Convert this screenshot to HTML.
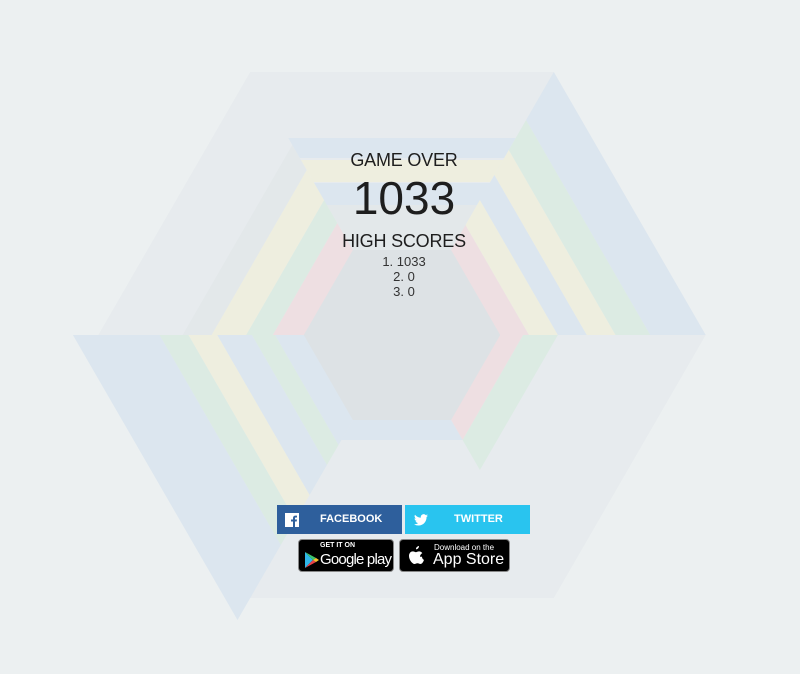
<!DOCTYPE html>
<html><head><meta charset="utf-8"><style>
html,body{margin:0;padding:0;background:#ecf0f1;width:800px;height:674px;overflow:hidden;font-family:"Liberation Sans",sans-serif}
svg{position:absolute;left:0;top:0}
.t{position:absolute;left:0;width:808px;text-align:center;color:#1e1e1e;white-space:nowrap}
.btn{position:absolute;height:29px;color:#fff;font-weight:bold;font-size:11px;line-height:29px;box-sizing:border-box}
.badge{position:absolute;top:539px;height:33px;background:#000;border:1px solid #888;border-radius:4px;box-sizing:border-box;color:#fff;white-space:nowrap;overflow:hidden}
</style></head><body>
<svg id="s" width="800" height="674" viewBox="0 0 800 674"></svg>
<div class="t" style="top:150px;font-size:18px;letter-spacing:-0.2px;">GAME OVER</div>
<div class="t" style="top:171px;font-size:46px;">1033</div>
<div class="t" style="top:231px;font-size:18px;letter-spacing:-0.2px;">HIGH SCORES</div>
<div class="t" style="top:254px;font-size:13px;line-height:15px;color:#333">1. 1033<br>2. 0<br>3. 0</div>

<div class="btn" style="left:277px;top:505px;width:125px;background:#2e5f9c;">
 <svg width="14" height="14" style="left:8px;top:8px" viewBox="0 0 14 14"><rect width="14" height="14" fill="#fff"/><path d="M8 14V8.5H6V6.5H8V5C8 3.4 9 2.6 10.4 2.6H12V4.5H10.8C10.2 4.5 10 4.8 10 5.3V6.5H12L11.7 8.5H10V14Z" fill="#2e5f9c"/></svg>
 <span style="position:absolute;left:43px">FACEBOOK</span></div>
<div class="btn" style="left:405px;top:505px;width:125px;background:#29c4ef;">
 <svg width="14" height="12" style="left:9px;top:9px" viewBox="0 0 24 20"><path d="M24 2.4a9.8 9.8 0 0 1-2.8.8A4.9 4.9 0 0 0 23.3.4a9.9 9.9 0 0 1-3.1 1.2A4.9 4.9 0 0 0 11.8 6 14 14 0 0 1 1.7.9a4.9 4.9 0 0 0 1.5 6.6A4.9 4.9 0 0 1 1 6.9a4.9 4.9 0 0 0 3.9 4.8 4.9 4.9 0 0 1-2.2.1 4.9 4.9 0 0 0 4.6 3.4A9.9 9.9 0 0 1 0 17.3 14 14 0 0 0 7.5 19.5c9.1 0 14-7.5 14-14v-.6A10 10 0 0 0 24 2.4z" fill="#fff"/></svg>
 <span style="position:absolute;left:49px">TWITTER</span></div>

<div class="badge" style="left:298px;width:96px;">
 <svg width="16" height="18" style="left:5px;top:11px" viewBox="0 0 16 18"><path d="M1 1L9 9L1 17Z" fill="#2fb6e8"/><path d="M1 1L12 7L9 9Z" fill="#3ec66b"/><path d="M1 17L12 11L9 9Z" fill="#e8434a"/><path d="M12 7L15 9L12 11L9 9Z" fill="#f8c22d"/></svg>
 <span style="position:absolute;left:21px;top:2px;font-size:7px;font-weight:bold">GET IT ON</span>
 <span style="position:absolute;left:21px;top:11px;font-size:15px;letter-spacing:-0.8px">Google play</span></div>
<div class="badge" style="left:399px;width:111px;">
 <svg width="18" height="20" style="left:7px;top:6px" viewBox="0 0 18 20"><path d="M12 0c.2 1.5-1.3 3.4-3 3.3-.2-1.5 1.3-3.2 3-3.3zM15 10.7c0 2.3 2 3.2 2 3.2s-1.2 4.1-3.5 4.1c-1.2 0-1.6-.7-3-.7s-1.9.7-3 .7C5.4 18 2 13.9 2 10c0-3 2-4.6 3.8-4.6 1.3 0 2.1.8 3.1.8s1.7-.8 3.2-.8c1.2 0 2.5.6 3.2 1.7-.2.1-2.3 1.3-2.3 3.6z" fill="#fff"/></svg>
 <span style="position:absolute;left:34px;top:3px;font-size:8px">Download on the</span>
 <span style="position:absolute;left:33px;top:11px;font-size:16px">App Store</span></div>

<script>
var C=[402,335],S=document.getElementById('s'),ns='http://www.w3.org/2000/svg';
function pt(k,a){var r=a/0.866,t=k*Math.PI/3;return [C[0]+r*Math.cos(t),C[1]+r*Math.sin(t)];}
function poly(p,f){var e=document.createElementNS(ns,'polygon');e.setAttribute('points',p.map(function(q){return q[0].toFixed(1)+','+q[1].toFixed(1)}).join(' '));e.setAttribute('fill',f);S.appendChild(e);}
function hex(a,f){var p=[];for(var k=0;k<6;k++)p.push(pt(k,a));poly(p,f);}
hex(263,'#e7ebee');
var B='#dce6ef',Y='#eeeedf',G='#dcebe3',R='#eedfe2',N='#e3e8ea';
var bands={
 4:[[83,130,N],[130,152,B],[153,175,Y],[177,197,B]],
 3:[[83,112,R],[112,135,G],[135,165,Y],[165,190,N]],
 5:[[83,110,R],[110,135,Y],[135,160,B],[160,185,Y],[185,215,G],[215,263,B]],
 0:[[83,105,R],[105,135,G]],
 1:[[83,105,B]],
 2:[[83,110,B],[110,130,G],[130,160,B],[160,185,Y],[185,210,G],[210,285,B]]
};
for(var k in bands){k=+k;bands[k].forEach(function(b){poly([pt(k,b[0]),pt(k+1,b[0]),pt(k+1,b[1]),pt(k,b[1])],b[2]);});}
hex(85,'#dde2e5');
</script>
</body></html>
